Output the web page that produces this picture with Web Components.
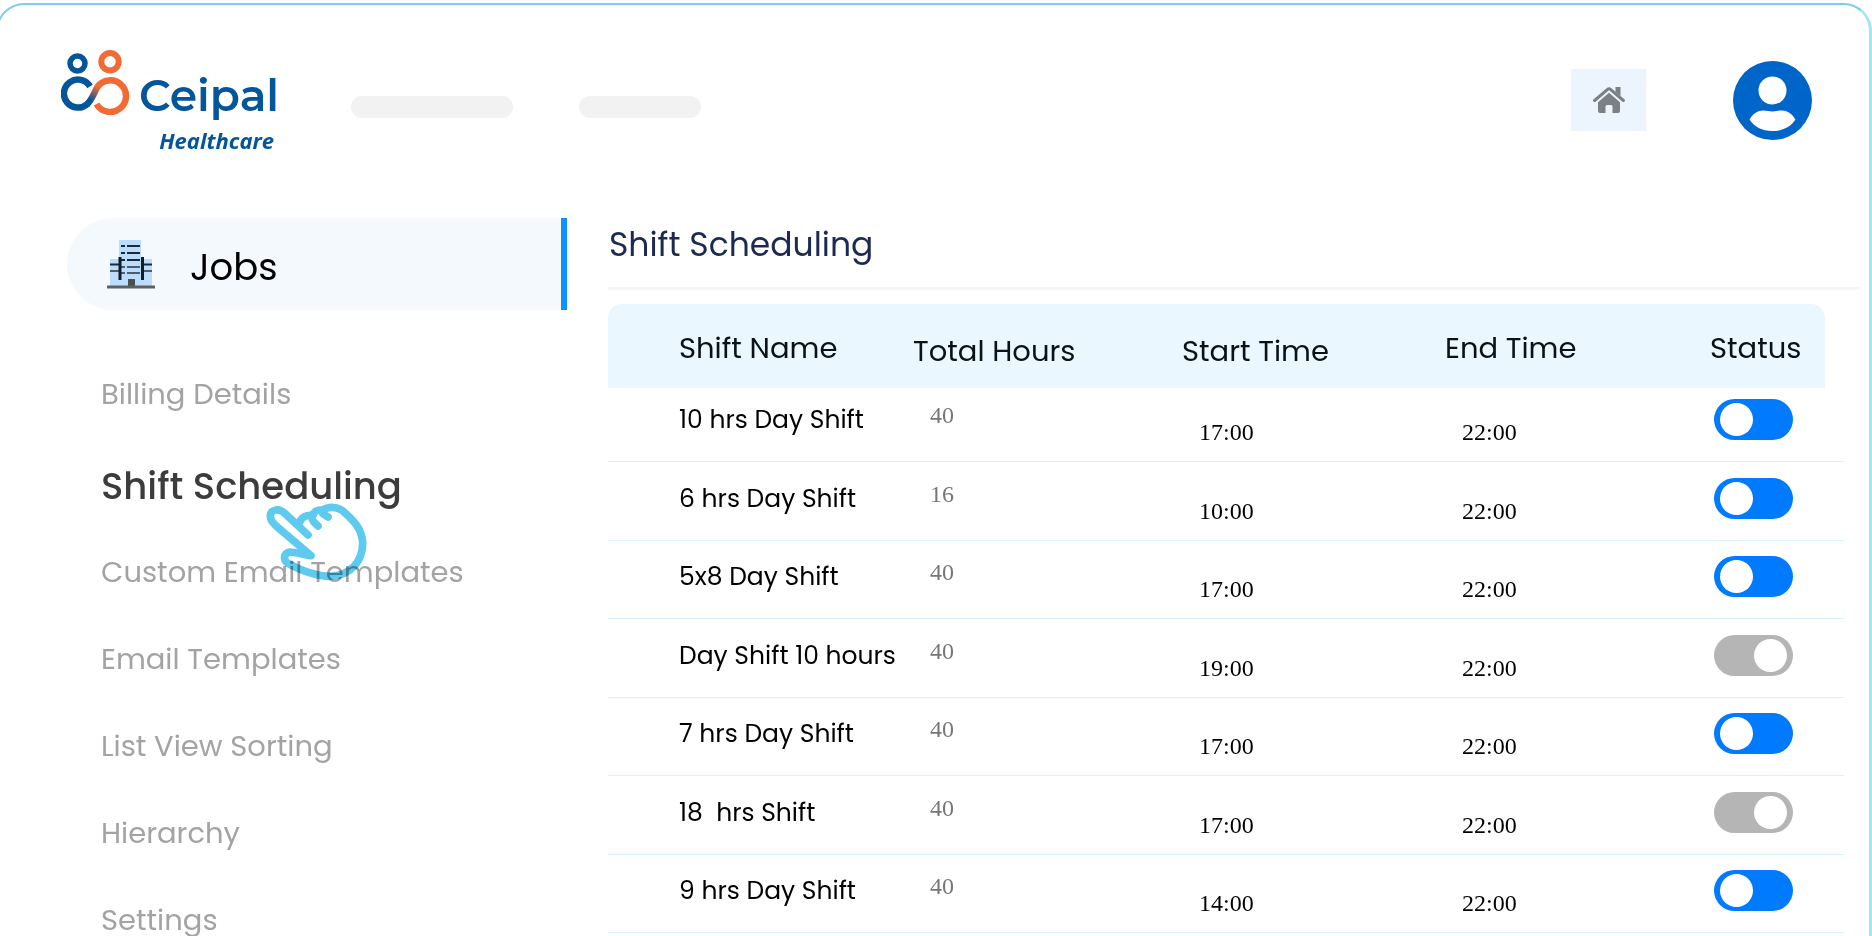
<!DOCTYPE html>
<html lang="en">
<head>
<meta charset="utf-8">
<meta name="viewport" content="width=device-width, initial-scale=1">
<title>Ceipal Healthcare - Shift Scheduling</title>
<style>
  html { scrollbar-width: none; }
  body { margin: 0; background: #fff; font-family: Poppins, Inter, sans-serif; color: #000; overflow-x: hidden; }
</style>
</head>
<body>
<ceipal-app>
  <app-header slot="header">
    <ceipal-logo></ceipal-logo>
  </app-header>
  <side-nav slot="nav" heading="Jobs">
    <nav-item>Billing Details</nav-item>
    <nav-item active>Shift Scheduling</nav-item>
    <nav-item>Custom Email Templates</nav-item>
    <nav-item>Email Templates</nav-item>
    <nav-item>List View Sorting</nav-item>
    <nav-item>Hierarchy</nav-item>
    <nav-item>Settings</nav-item>
  </side-nav>
  <page-title slot="main">Shift Scheduling</page-title>
  <shift-table slot="main"></shift-table>
</ceipal-app>

<script>
const define = (name, html, setup) => {
  const template = document.createElement('template');
  template.innerHTML = html;
  customElements.define(name, class extends HTMLElement {
    constructor() {
      super();
      this.attachShadow({ mode: 'open' }).append(template.content.cloneNode(true));
    }
    connectedCallback() { if (setup) setup(this, this.shadowRoot); }
  });
};

define('ceipal-app', `
<style>
  :host { display: block; }
  .card { margin: 3px 0 0 -4px; border: 2px solid #7dcdf0; border-right: 3px solid #a5e3f7; border-radius: 28px; background: #fff; }
  .body { display: grid; grid-template-columns: 569px minmax(0, 1fr); column-gap: 41px; padding-right: 9px; }
</style>
<div class="card">
  <slot name="header"></slot>
  <div class="body">
    <slot name="nav"></slot>
    <main><slot name="main"></slot></main>
  </div>
</div>`);

define('ceipal-logo', `
<style>
  :host { display: block; }
  a { display: grid; grid-template-columns: 70px 136px; column-gap: 8px; color: #04559a; text-decoration: none; }
  svg { display: block; width: 70px; height: 66px; }
  .name { align-self: end; font: 600 44px/52px Montserrat, Inter, sans-serif; padding-top: 20px; }
  .sub { grid-column: 1 / 3; margin-top: 5px; padding-right: 1px; text-align: right; font: italic 700 22px/28px "Open Sans", sans-serif; }
</style>
<a href="#home">
  <svg viewBox="0 0 70 66" fill="none" aria-hidden="true">
    <defs>
      <linearGradient id="g" gradientUnits="userSpaceOnUse" x1="27" y1="54" x2="36" y2="38">
        <stop offset=".2" stop-color="#04559a"/><stop offset="1" stop-color="#f26b35"/>
      </linearGradient>
    </defs>
    <circle cx="16.5" cy="14.5" r="7.5" stroke="#04559a" stroke-width="5.5"/>
    <circle cx="49" cy="12.7" r="8.7" stroke="#f26b35" stroke-width="6"/>
    <path d="M29 37.5A14 14 0 1 0 26.5 54.8" stroke="#04559a" stroke-width="6.500"/>
    <path d="M36.300 38A15.800 15.800 0 1 1 35.500 55" stroke="#f26b35" stroke-width="6.500"/>
    <path d="M26 55.200C31 51 33 44 36.600 37.500" stroke="url(#g)" stroke-width="6.500"/>
  </svg>
  <span class="name">Ceipal</span>
  <span class="sub">Healthcare</span>
</a>`);

define('app-header', `
<style>
  header { display: flex; align-items: center; padding: 44px 57px 64px 63px; }
  .bars { display: flex; gap: 66px; margin: 10px auto 0 76px; }
  .bar { height: 22px; border-radius: 11px; background: #f2f2f2; width: 162px; }
  .bar.short { width: 122px; }
  button { border: 0; padding: 0; margin: 0 0 3px; background: none; display: grid; place-items: center; cursor: pointer; }
  .home { width: 75px; height: 62px; background: #ecf5fe; margin-right: 87px; }
  svg { display: block; }
</style>
<header>
  <slot></slot>
  <div class="bars"><div class="bar"></div><div class="bar short"></div></div>
  <button class="home" aria-label="Home">
    <svg width="32" height="26" viewBox="0 0 32 26" fill="#7b8084">
      <path d="M1.600 13.500L14.600 2.300Q16 1.200 17.400 2.300L30.400 13.500" fill="none" stroke="#7b8084" stroke-width="3" stroke-linecap="round" stroke-linejoin="round"/>
      <path d="M22.500 0h5v9l-5-4z"/>
      <path d="M16 5.800L27 15.300v8.700q0 2-2 2h-5.500v-6.500q0-1.500-1.500-1.500h-4q-1.500 0-1.500 1.500V26H7q-2 0-2-2v-8.700z"/>
    </svg>
  </button>
  <button aria-label="Account">
    <svg width="79" height="79" viewBox="0 0 79 79">
      <circle cx="39.500" cy="39.500" r="39.500" fill="#0065c8"/>
      <circle cx="39.500" cy="29.500" r="14" fill="#fff"/>
      <path d="M16.500 58.500C20 52.500 25 49.500 30 49.500C34 49.500 36 50.500 39.500 50.500S45 49.500 49 49.500C54 49.500 59 52.500 62.500 58.500C58 65.500 50 70 39.500 70S21 65.500 16.500 58.500Z" fill="#fff"/>
    </svg>
  </button>
</header>`);

define('nav-item', `
<style>
  :host { display: block; }
  a { display: flex; align-items: center; box-sizing: border-box; height: 87px; padding: 2px 0 0 34px; font-size: 29px; color: #a3a3a3; text-decoration: none; white-space: nowrap; }
  :host([active]) a { height: 91px; padding-top: 7px; font-size: 37px; font-weight: 500; color: #3c3c3c; }
</style>
<a href="#"><slot></slot></a>`);

define('side-nav', `
<style>
  :host { display: block; padding-left: 69px; }
  .head { display: flex; align-items: center; gap: 34px; height: 92px; box-sizing: border-box; padding-left: 39px; background: #f4f9fe; border-right: 6px solid #0a93ff; border-radius: 46px 0 0 46px; }
  h2 { margin: 0; padding-top: 5px; font-size: 37px; font-weight: 400; }
  nav { position: relative; margin-top: 40px; }
  .hand { position: absolute; left: 199px; top: 153px; width: 102px; height: 78px; mix-blend-mode: multiply; pointer-events: none; }
</style>
<div class="head">
  <svg width="50" height="50" viewBox="0 0 50 50" aria-hidden="true">
    <path d="M4 20h9V1h22v19h11v27H4z" fill="#bbddfb"/>
    <g stroke="#1b2a38" stroke-width="2">
      <path d="M15 7h4M21 7h13M15 14h4M21 14h13M15 21h4M21 21h13"/>
      <path d="M4 25.500h9M37 25.500h9"/>
      <path d="M15 28h4M21 28h13M15 34h4M21 34h13M4 32h9M37 32h9" stroke="#4c5d6e"/>
      <path d="M14 18v23M36.500 18v23" stroke="#111d28" stroke-width="3"/>
    </g>
    <path d="M22 40h7v8h-7z" fill="#4b4f52"/>
    <path d="M1 46.500h48v3H1z" fill="#5b6065"/>
  </svg>
  <h2></h2>
</div>
<nav aria-label="Jobs">
  <slot></slot>
  <svg class="hand" viewBox="558 428 306 234" fill="none" stroke="#5fcaf0" stroke-width="23" stroke-linecap="round" stroke-linejoin="round" aria-hidden="true">
    <path d="M684 524L612 457C595 442 571 448 571 468C571 480 580 490 592 500L693 586C668 584 648 575 630 575C609 579 609 600 625 610C670 634 715 648 750 648C815 646 849 600 848 545C844 500 815 476 793 456C775 438 745 437 728 450C712 446 702 454 698 466C680 463 664 470 658 488"/>
    <path d="M698 466Q693 474 701 484L714 497M728 450Q724 456 731 462L744 470"/>
  </svg>
</nav>`, (el, root) => { root.querySelector('h2').textContent = el.getAttribute('heading'); });

define('page-title', `
<style>
  :host { display: block; border-bottom: 3px solid #f5f6f8; padding: 2px 0 17px 1px; }
  h1 { margin: 0; font-size: 33px; line-height: 50px; font-weight: 400; color: #1c2951; }
</style>
<h1><slot></slot></h1>`);

define('toggle-switch', `
<style>
  :host { display: block; }
  input { appearance: none; display: block; margin: 0; box-sizing: border-box; width: 79px; height: 41px; padding: 4px 6px; border-radius: 21px; background: #b5b5b5; cursor: pointer; }
  input::before { content: ""; display: block; width: 33px; height: 33px; border-radius: 50%; background: #fff; margin-left: auto; }
  input:checked { background: #007bff; }
  input:checked::before { margin-left: 0; }
</style>
<input type="checkbox" role="switch">`, (el, root) => {
  const input = root.querySelector('input');
  input.checked = el.hasAttribute('on');
  input.setAttribute('aria-label', el.getAttribute('label'));
});

const shifts = [
  ['10 hrs Day Shift', 40, '17:00', '22:00', true],
  ['6 hrs Day Shift', 16, '10:00', '22:00', true],
  ['5x8 Day Shift', 40, '17:00', '22:00', true],
  ['Day Shift 10 hours', 40, '19:00', '22:00', false],
  ['7 hrs Day Shift', 40, '17:00', '22:00', true],
  ['18  hrs Shift', 40, '17:00', '22:00', false],
  ['9 hrs Day Shift', 40, '14:00', '22:00', true]
];

define('shift-table', `
<style>
  :host { display: block; margin: 14px 16px 0 0; }
  table { width: 100%; table-layout: fixed; border-collapse: separate; border-spacing: 0; }
  col.hours { width: 269px; }
  col.start { width: 263px; }
  col.end { width: 265px; }
  col.status { width: 115px; }
  col.edge { width: 19px; }
  th { height: 84px; box-sizing: border-box; padding: 5px 0 0; background: #eaf7fe; font-size: 29px; font-weight: 400; text-align: left; white-space: nowrap; color: #0b1216; }
  th:first-child { border-top-left-radius: 14px; }
  th.last { border-top-right-radius: 14px; }
  th.low { padding-top: 11px; }
  td { height: 78px; box-sizing: border-box; padding: 0; vertical-align: bottom; border-bottom: 1px solid #d8f2fb; line-height: 28px; }
  tr:first-child td { height: 74px; }
  tr:nth-child(even) td { height: 79px; }
  th:first-child, td.name { padding-left: 71px; }
  td.name { padding-bottom: 27px; font-size: 25px; white-space: pre; }
  td.hours, td.time { padding-left: 17px; font-family: "Liberation Serif", serif; font-size: 24px; }
  td.hours { padding-bottom: 32px; color: #777; }
  td.time { padding-bottom: 15px; }
  td.status { padding: 0 0 21px 4px; }
</style>
<table>
  <colgroup><col><col class="hours"><col class="start"><col class="end"><col class="status"><col class="edge"></colgroup>
  <thead><tr><th>Shift Name</th><th class="low">Total Hours</th><th class="low">Start Time</th><th>End Time</th><th class="last">Status</th></tr></thead>
  <tbody></tbody>
</table>`, (el, root) => {
  root.querySelector('tbody').innerHTML = shifts.map(([name, hours, start, end, on]) =>
    `<tr><td class="name">${name}</td><td class="hours">${hours}</td><td class="time">${start}</td><td class="time">${end}</td>` +
    `<td class="status"><toggle-switch label="${name}"${on ? ' on' : ''}></toggle-switch></td><td class="edge"></td></tr>`).join('');
});
</script>
</body>
</html>
